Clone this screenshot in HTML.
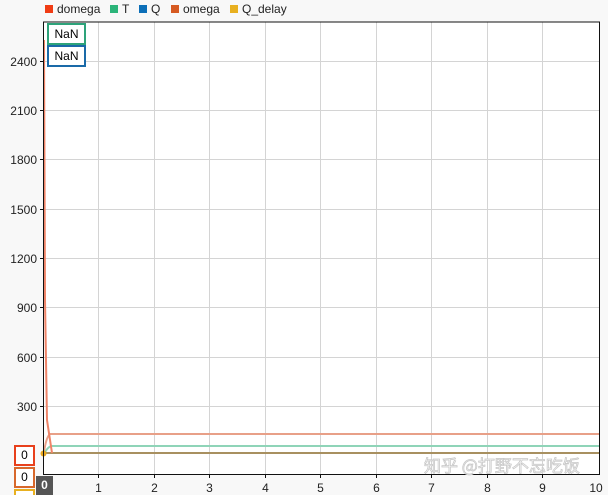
<!DOCTYPE html><html style="width:608px;height:495px;overflow:hidden"><head><style>
body{margin:0;width:608px;height:495px;background:#f8f8f8;font-family:"Liberation Sans","Noto Sans CJK SC",sans-serif;overflow:hidden;position:relative}
.lg{position:absolute;top:2px;font-size:12px;color:#222;white-space:nowrap}
.sq{position:absolute;top:5px;width:8px;height:8px}
.box{position:absolute;background:#fff;border:2px solid;font-size:12px;text-align:center;box-sizing:border-box}
</style></head><body>
<div class="sq" style="left:45px;background:#f03c14"></div><div class="lg" style="left:57px">domega</div>
<div class="sq" style="left:110px;background:#2cb57a"></div><div class="lg" style="left:122px">T</div>
<div class="sq" style="left:139px;background:#0c6fb8"></div><div class="lg" style="left:151px">Q</div>
<div class="sq" style="left:171px;background:#d65a22"></div><div class="lg" style="left:183px">omega</div>
<div class="sq" style="left:230px;background:#e8b020"></div><div class="lg" style="left:242px">Q_delay</div>
<svg width="608" height="495" style="position:absolute;left:0;top:0" font-family="Liberation Sans" font-size="12">
<rect x="43" y="22" width="556" height="452" fill="#fff"/>
<g stroke="#d4d4d4" stroke-width="1">
<line x1="98.5" y1="22" x2="98.5" y2="474"/><line x1="154.5" y1="22" x2="154.5" y2="474"/><line x1="209.5" y1="22" x2="209.5" y2="474"/><line x1="265.5" y1="22" x2="265.5" y2="474"/><line x1="320.5" y1="22" x2="320.5" y2="474"/><line x1="376.5" y1="22" x2="376.5" y2="474"/><line x1="431.5" y1="22" x2="431.5" y2="474"/><line x1="487.5" y1="22" x2="487.5" y2="474"/><line x1="542.5" y1="22" x2="542.5" y2="474"/>
<line x1="43" y1="61.5" x2="599" y2="61.5"/><line x1="43" y1="110.5" x2="599" y2="110.5"/><line x1="43" y1="159.5" x2="599" y2="159.5"/><line x1="43" y1="209.5" x2="599" y2="209.5"/><line x1="43" y1="258.5" x2="599" y2="258.5"/><line x1="43" y1="307.5" x2="599" y2="307.5"/><line x1="43" y1="357.5" x2="599" y2="357.5"/><line x1="43" y1="406.5" x2="599" y2="406.5"/>
</g>
<path d="M43.5 455 Q46 437 50 434 L599 434" stroke="#e8a088" stroke-width="2" fill="none"/>
<path d="M43.5 455 Q48 446 52 446 L599 446" stroke="#8fd4b8" stroke-width="2" fill="none"/>
<path d="M43.5 453 L599 453" stroke="#a89060" stroke-width="2" fill="none"/>
<path d="M44 40 L45 300 L47 420 L52 453" stroke="#ef8468" stroke-width="2" fill="none"/>
<circle cx="43.5" cy="453.5" r="3" fill="#e8a820"/>
<path d="M43.5 22 H599.5 V474.5 H43.5 Z" stroke="#111" fill="none"/>
<g stroke="#111"><line x1="40" y1="61.5" x2="43" y2="61.5"/><line x1="40" y1="110.5" x2="43" y2="110.5"/><line x1="40" y1="159.5" x2="43" y2="159.5"/><line x1="40" y1="209.5" x2="43" y2="209.5"/><line x1="40" y1="258.5" x2="43" y2="258.5"/><line x1="40" y1="307.5" x2="43" y2="307.5"/><line x1="40" y1="357.5" x2="43" y2="357.5"/><line x1="40" y1="406.5" x2="43" y2="406.5"/>
<line x1="98.5" y1="474" x2="98.5" y2="478"/><line x1="154.5" y1="474" x2="154.5" y2="478"/><line x1="209.5" y1="474" x2="209.5" y2="478"/><line x1="265.5" y1="474" x2="265.5" y2="478"/><line x1="320.5" y1="474" x2="320.5" y2="478"/><line x1="376.5" y1="474" x2="376.5" y2="478"/><line x1="431.5" y1="474" x2="431.5" y2="478"/><line x1="487.5" y1="474" x2="487.5" y2="478"/><line x1="542.5" y1="474" x2="542.5" y2="478"/></g>
<g fill="#222" text-anchor="end"><text x="37" y="66">2400</text><text x="37" y="115">2100</text><text x="37" y="164">1800</text><text x="37" y="214">1500</text><text x="37" y="263">1200</text><text x="37" y="312">900</text><text x="37" y="362">600</text><text x="37" y="411">300</text></g>
<g fill="#222" text-anchor="middle"><text x="98.5" y="492">1</text><text x="154.5" y="492">2</text><text x="209.5" y="492">3</text><text x="265.5" y="492">4</text><text x="320.5" y="492">5</text><text x="376.5" y="492">6</text><text x="431.5" y="492">7</text><text x="487.5" y="492">8</text><text x="542.5" y="492">9</text><text x="596" y="492">10</text></g>
<text x="424" y="472" font-size="17" fill="#fff" stroke="#c8c8c8" stroke-width="0.8" font-family="Noto Sans CJK SC">知乎 @打野不忘吃饭</text>
</svg>
<div class="box" style="left:47px;top:23px;width:39px;height:22px;border-color:#2ea37a;line-height:18px">NaN</div>
<div class="box" style="left:47px;top:45px;width:39px;height:22px;border-color:#1a6aa8;line-height:18px">NaN</div>
<div class="box" style="left:14px;top:445px;width:21px;height:21px;border-color:#e8401c;line-height:17px">0</div>
<div class="box" style="left:14px;top:467px;width:21px;height:21px;border-color:#d8682c;line-height:17px">0</div>
<div class="box" style="left:14px;top:489px;width:21px;height:6px;border-color:#e8b020;border-bottom:none"></div>
<div style="position:absolute;left:36px;top:476px;width:17px;height:19px;background:#555;color:#fff;font-weight:bold;font-size:12px;text-align:center;line-height:19px">0</div>
</body></html>
